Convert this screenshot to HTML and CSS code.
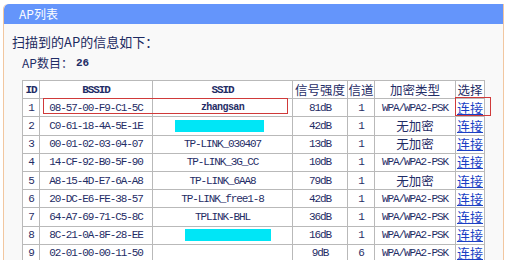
FILE: index.html
```html
<!DOCTYPE html>
<html>
<head>
<meta charset="utf-8">
<link rel="stylesheet" href="styles.css">
</head>
<body>
<div class="panel">
  <div class="bar">AP列表</div>
  <div class="content">
    <div class="lead">扫描到的AP的信息如下：</div>
    <div class="count"><span class="lbl">AP数目：</span><span class="num">26</span></div>
    <div class="tablewrap">
      <table class="ap">
        <colgroup>
          <col class="c-id"><col class="c-bssid"><col class="c-ssid"><col class="c-sig"><col class="c-ch"><col class="c-enc"><col class="c-sel">
        </colgroup>
        <tr class="head"><td class="m">ID</td><td class="m">BSSID</td><td class="m">SSID</td><td>信号强度</td><td>信道</td><td>加密类型</td><td>选择</td></tr>
        <tr><td class="m">1</td><td class="m">08-57-00-F9-C1-5C</td><td class="m b">zhangsan</td><td class="m">81dB</td><td class="m">1</td><td class="m">WPA/WPA2-PSK</td><td><a>连接</a></td></tr>
        <tr><td class="m">2</td><td class="m">C0-61-18-4A-5E-1E</td><td><span class="mask m1"></span></td><td class="m">42dB</td><td class="m">1</td><td>无加密</td><td><a>连接</a></td></tr>
        <tr><td class="m">3</td><td class="m">00-01-02-03-04-07</td><td class="m">TP-LINK_030407</td><td class="m">13dB</td><td class="m">1</td><td>无加密</td><td><a>连接</a></td></tr>
        <tr><td class="m">4</td><td class="m">14-CF-92-B0-5F-90</td><td class="m">TP-LINK_3G_CC</td><td class="m">10dB</td><td class="m">1</td><td class="m">WPA/WPA2-PSK</td><td><a>连接</a></td></tr>
        <tr><td class="m">5</td><td class="m">A8-15-4D-E7-6A-A8</td><td class="m">TP-LINK_6AA8</td><td class="m">79dB</td><td class="m">1</td><td>无加密</td><td><a>连接</a></td></tr>
        <tr><td class="m">6</td><td class="m">20-DC-E6-FE-38-57</td><td class="m">TP-LINK_free1-8</td><td class="m">42dB</td><td class="m">1</td><td class="m">WPA/WPA2-PSK</td><td><a>连接</a></td></tr>
        <tr><td class="m">7</td><td class="m">64-A7-69-71-C5-8C</td><td class="m">TPLINK-BHL</td><td class="m">36dB</td><td class="m">1</td><td class="m">WPA/WPA2-PSK</td><td><a>连接</a></td></tr>
        <tr><td class="m">8</td><td class="m">8C-21-0A-8F-28-EE</td><td><span class="mask m2"></span></td><td class="m">16dB</td><td class="m">1</td><td class="m">WPA/WPA2-PSK</td><td><a>连接</a></td></tr>
        <tr><td class="m">9</td><td class="m">02-01-00-00-11-50</td><td class="m"></td><td class="m">9dB</td><td class="m">6</td><td class="m">WPA/WPA2-PSK</td><td><a>连接</a></td></tr>
      </table>
      <div class="hl hl-row"></div>
      <div class="hl hl-link"></div>
    </div>
  </div>
</div>
</body>
</html>
```
FILE: styles.css
```css
html, body {
  margin: 0;
  padding: 0;
  background: #ffffff;
  font-family: "Noto Sans CJK SC", "Liberation Sans", sans-serif;
  color: #1f2d66;
}
.panel {
  margin: 4px 0 0 3px;
  width: 499px;
  height: 256px;
  border-left: 1px solid #f2c7a0;
  border-right: 1px solid #f2c7a0;
  border-top-left-radius: 5px;
  overflow: hidden;
  background: #f9f9f9;
}
.bar {
  height: 20px;
  line-height: 20px;
  background: #6495fb;
  color: #ffffff;
  font-size: 12px;
  padding-left: 15px;
  border-top-left-radius: 5px;
}
.content {
  padding: 10px 0 0 8px;
}
.lead {
  font-size: 13px;
  line-height: 16px;
  color: #1c2a60;
}
.count {
  margin-top: 5px;
  padding-left: 10px;
  font-size: 12px;
  line-height: 16px;
  display: flex;
}
.count .lbl { width: 54px; }
.count .num {
  font-family: "Liberation Mono", monospace;
  font-size: 11px;
  font-weight: bold;
}
.tablewrap {
  position: relative;
  margin: 9px 0 0 10px;
  width: 462px;
}
.ap {
  border-collapse: collapse;
  table-layout: fixed;
  width: 462px;
  background: #ffffff;
}
.c-id { width: 17px; }
.c-bssid { width: 113px; }
.c-ssid { width: 140px; }
.c-sig { width: 55px; }
.c-ch { width: 27px; }
.c-enc { width: 81px; }
.c-sel { width: 29px; }
.ap td {
  border: 1px solid #b9b9b9;
  height: 17.2px;
  padding: 0;
  text-align: center;
  vertical-align: middle;
  font-size: 12.5px;
  line-height: 14px;
  white-space: nowrap;
  overflow: hidden;
  color: #1f2d66;
}
.ap td.m {
  font-family: "Liberation Mono", monospace;
  font-size: 11px;
  letter-spacing: -1.1px;
}
.ap td.b { font-weight: bold; font-size: 10px; letter-spacing: -0.6px; }
.ap tr.head td.m { font-weight: bold; }
.ap a {
  color: #1a3fc4;
  text-decoration: underline;
  font-size: 13px;
}
.mask {
  display: block;
  height: 12px;
  background: #00e6f6;
}
.mask.m1 { width: 89px; margin-left: 22px; }
.mask.m2 { width: 86px; margin-left: 32px; }
.hl {
  position: absolute;
  border: 1px solid #d03a3a;
}
.hl-row { left: 21px; top: 18px; width: 243px; height: 14px; }
.hl-link { left: 433px; top: 17px; width: 34px; height: 17px; }
```
